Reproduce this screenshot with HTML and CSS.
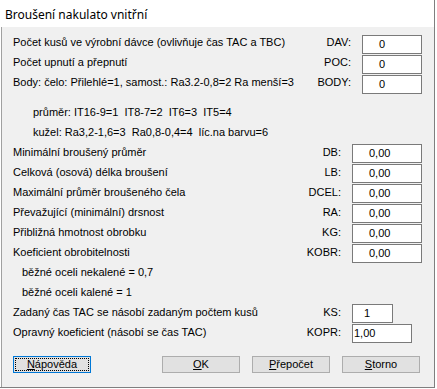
FILE: index.html
```html
<!DOCTYPE html>
<html lang="cs">
<head>
<meta charset="utf-8">
<title>Broušení nakulato vnitřní</title>
<link rel="stylesheet" href="styles.css">
</head>
<body>
<div class="window">
  <div class="titlebar"><span class="title">Broušení nakulato vnitřní</span></div>
  <div class="client">
    <div class="row wide">
      <span class="text">Počet kusů ve výrobní dávce (ovlivňuje čas TAC a TBC)</span>
      <span class="code">DAV:</span>
      <span class="slot"><span class="field pad-17">0</span></span>
    </div>
    <div class="row wide">
      <span class="text">Počet upnutí a přepnutí</span>
      <span class="code">POC:</span>
      <span class="slot"><span class="field pad-17">0</span></span>
    </div>
    <div class="row wide">
      <span class="text">Body: čelo: Přilehlé=1, samost.: Ra3.2-0,8=2 Ra menší=3</span>
      <span class="code">BODY:</span>
      <span class="slot"><span class="field pad-17">0</span></span>
    </div>
    <div class="spacer"></div>
    <div class="row">
      <span class="text indent-20 pre">průměr: IT16-9=1  IT8-7=2  IT6=3  IT5=4</span>
    </div>
    <div class="row">
      <span class="text indent-20 pre">kužel: Ra3,2-1,6=3  Ra0,8-0,4=4  líc.na barvu=6</span>
    </div>
    <div class="row">
      <span class="text">Minimální broušený průměr</span>
      <span class="code">DB:</span>
      <span class="slot"><span class="field pad-17">0,00</span></span>
    </div>
    <div class="row">
      <span class="text">Celková (osová) délka broušení</span>
      <span class="code">LB:</span>
      <span class="slot"><span class="field pad-17">0,00</span></span>
    </div>
    <div class="row">
      <span class="text">Maximální průměr broušeného čela</span>
      <span class="code">DCEL:</span>
      <span class="slot"><span class="field pad-17">0,00</span></span>
    </div>
    <div class="row">
      <span class="text">Převažující (minimální) drsnost</span>
      <span class="code">RA:</span>
      <span class="slot"><span class="field pad-17">0,00</span></span>
    </div>
    <div class="row">
      <span class="text">Přibližná hmotnost obrobku</span>
      <span class="code">KG:</span>
      <span class="slot"><span class="field pad-17">0,00</span></span>
    </div>
    <div class="row">
      <span class="text">Koeficient obrobitelnosti</span>
      <span class="code">KOBR:</span>
      <span class="slot"><span class="field pad-17">0,00</span></span>
    </div>
    <div class="row">
      <span class="text indent-9">běžné oceli nekalené = 0,7</span>
    </div>
    <div class="row">
      <span class="text indent-9">běžné oceli kalené = 1</span>
    </div>
    <div class="row">
      <span class="text">Zadaný čas TAC se násobí zadaným počtem kusů</span>
      <span class="code">KS:</span>
      <span class="slot"><span class="field narrow pad-12">1</span></span>
    </div>
    <div class="row">
      <span class="text">Opravný koeficient (násobí se čas TAC)</span>
      <span class="code">KOPR:</span>
      <span class="slot"><span class="field medium pad-2">1,00</span></span>
    </div>
    <div class="buttons">
      <span class="btn default"><span class="focus"><u>N</u>ápověda</span></span>
      <span class="btn-group">
        <span class="btn"><u>O</u>K</span>
        <span class="btn"><u>P</u>řepočet</span>
        <span class="btn"><u>S</u>torno</span>
      </span>
    </div>
  </div>
</div>
</body>
</html>
```

FILE: styles.css
```css
html, body {
  margin: 0;
  padding: 0;
  background: #ffffff;
}

body {
  width: 437px;
  height: 389px;
  overflow: hidden;
  font-family: "Liberation Sans", Arial, sans-serif;
  font-size: 11px;
  color: #000000;
}

.window {
  box-sizing: border-box;
  width: 435px;
  height: 388px;
  border-right: 1px solid #7f7f7f;
  border-bottom: 1px solid #7f7f7f;
  display: flex;
  flex-direction: column;
}

.titlebar {
  height: 27px;
  background: #ffffff;
  display: flex;
  align-items: center;
  padding-left: 5px;
}

.title {
  font-family: "Noto Sans", "Open Sans", sans-serif;
  font-size: 12px;
  color: #000000;
  position: relative;
  top: 1px;
}

.client {
  flex: 1;
  background: #f0f0f0;
  border-left: 1px solid #a0a0a0;
  margin-left: 1px;
  padding: 5px 12px 0 11px;
  display: flex;
  flex-direction: column;
}

.row {
  height: 20px;
  display: flex;
  align-items: flex-start;
  line-height: 20px;
  white-space: nowrap;
}

.text {
  flex: 1;
}

.pre {
  white-space: pre;
}

.indent-20 {
  padding-left: 20px;
}

.indent-9 {
  padding-left: 9px;
}

.code {
  text-align: right;
  margin-right: 11px;
}

.slot {
  width: 70px;
  display: flex;
}

.row.wide .slot {
  width: 60px;
}

.field {
  box-sizing: border-box;
  margin-top: 2px;
  width: 100%;
  height: 19px;
  line-height: 17px;
  border: 1px solid #7a7a7a;
  background: #ffffff;
}

.row.wide .field {
  margin-top: 3px;
}

.field.narrow {
  width: 41px;
}

.field.medium {
  width: 60px;
}

.pad-17 { padding-left: 16px; }
.pad-12 { padding-left: 11px; }
.pad-2 { padding-left: 1px; }

.spacer {
  height: 10px;
}

.buttons {
  margin-top: 14px;
  display: flex;
  justify-content: space-between;
  padding-right: 2px;
}

.btn-group {
  display: flex;
  gap: 12px;
}

.btn {
  box-sizing: border-box;
  width: 78px;
  height: 17px;
  background: #e1e1e1;
  border: 1px solid #adadad;
  display: flex;
  align-items: center;
  justify-content: center;
  line-height: 15px;
}

.btn u {
  text-decoration-thickness: 1px;
  text-underline-offset: 1px;
}

.btn.default {
  border: 1px solid #0078d7;
  padding: 1px;
}

.focus {
  box-sizing: border-box;
  width: 100%;
  height: 100%;
  border: 1px dotted #000000;
  display: flex;
  align-items: center;
  justify-content: center;
  line-height: 11px;
}
```
